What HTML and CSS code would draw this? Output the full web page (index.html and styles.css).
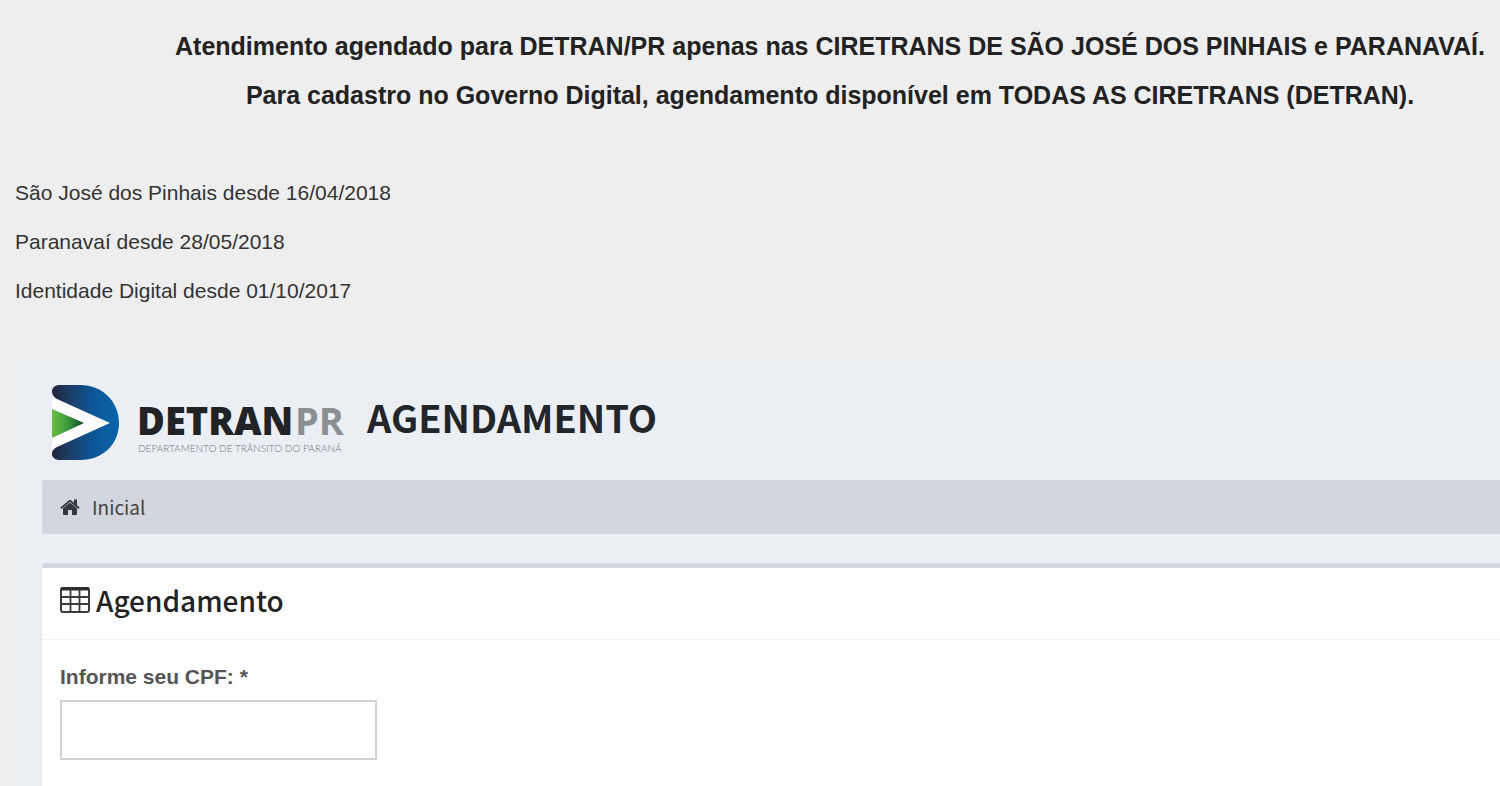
FILE: index.html
```
<!DOCTYPE html>
<html lang="pt-br">

<head>
    <meta charset="UTF-8">
    <meta name="viewport" content="width=device-width, initial-scale=1.0">
    <title>Agendamento</title>
    <link rel="stylesheet" href="styles.css">
</head>

<body>
    <div class="aviso">
        <p>Atendimento agendado para DETRAN/PR apenas nas CIRETRANS DE SÃO JOSÉ DOS PINHAIS e PARANAVAÍ.</p>
        <p>Para cadastro no Governo Digital, agendamento disponível em TODAS AS CIRETRANS (DETRAN).</p>
    </div>
    <div class="datas">
        <p>São José dos Pinhais desde 16/04/2018</p>
        <p>Paranavaí desde 28/05/2018</p>
        <p>Identidade Digital desde 01/10/2017</p>
    </div>
    <div class="painel">
        <!-- logo e titulo -->
        <div class="topo">
            <svg class="logo" width="310" height="84" viewBox="0 0 310 84">
                <defs>
                    <linearGradient id="azul" x1="0" y1="0" x2="1" y2="0">
                        <stop offset="0" stop-color="#20243c"></stop>
                        <stop offset="0.25" stop-color="#1d3c66"></stop>
                        <stop offset="0.6" stop-color="#0c5596"></stop>
                        <stop offset="1" stop-color="#0a64a8"></stop>
                    </linearGradient>
                    <linearGradient id="verde" x1="0" y1="0" x2="1" y2="0">
                        <stop offset="0" stop-color="#6cbb45"></stop>
                        <stop offset="0.45" stop-color="#3f9e3b"></stop>
                        <stop offset="1" stop-color="#0c4a25"></stop>
                    </linearGradient>
                </defs>
                <path fill="#ffffff" d="M10 16 L66 38 L66 46 L10 68 Z"></path>
                <path fill="url(#azul)" d="M18 4 H38 C61 4 77 21 77 42 C77 63 61 79 38 79 H18 C9 79 7 70 15 66 L68 42 L15 18 C7 13 9 4 18 4 Z"></path>
                <path fill="url(#verde)" d="M10 28 L42 42 L10 57 Z"></path>
                <text class="logo_detran" x="95" y="54">DETRAN</text>
                <text class="logo_pr" x="253" y="54">PR</text>
                <text class="logo_sub" x="96" y="71">DEPARTAMENTO DE TRÂNSITO DO PARANÁ</text>
            </svg>
            <h1>AGENDAMENTO</h1>
        </div>
        <!-- menu -->
        <nav class="menu">
            <a href="#">
                <svg width="20" height="18" viewBox="0 0 20 18">
                    <path fill="#333740" d="M10 4.500 L17 10.300 V16 Q17 17 16 17 H12 V12 H8 V17 H4 Q3 17 3 16 V10.300 Z"></path>
                    <path fill="#333740" d="M14 1.500 H17 V7.300 L19.600 9.500 L18.500 10.900 L10 3.800 L1.500 10.900 L0.400 9.500 L9 2.200 Q10 1.400 11 2.200 L14 4.700 Z"></path>
                </svg>
                <span>Inicial</span>
            </a>
        </nav>
        <!-- formulario -->
        <div class="caixa">
            <h2>
                <svg width="30" height="26" viewBox="0 0 30 26">
                    <rect x="1" y="1" width="28" height="24" rx="2" fill="none" stroke="#3b3b3b" stroke-width="2"></rect>
                    <path stroke="#2b2b2b" stroke-width="3" d="M1 2 H29"></path>
                    <path fill="none" stroke="#3b3b3b" stroke-width="1.800" d="M1 10 H29 M1 17 H29 M10.500 2 V25 M19.500 2 V25"></path>
                </svg>
                <span>Agendamento</span>
            </h2>
            <form action="#" method="POST">
                <label for="cpfId">Informe seu CPF: *</label>
                <input type="text" name="cpf" class="cpf" id="cpfId" value="">
            </form>
        </div>
    </div>
</body>

</html>
```
FILE: styles.css
```
body,p,h1,h2,form,input {
    margin: 0;
    padding: 0;
}
html {
    background-color: #eeeeee;
}
body {
    font: normal 21px/49px 'Liberation Sans', Arial, sans-serif;
    color: #333333;
    overflow: hidden;
}
a {
    text-decoration: none;
}
.aviso {
    padding: 22px 0 0 160px;
    font-size: 25px;
    font-weight: bold;
    color: #222222;
    text-align: center;
    white-space: nowrap;
}
.datas {
    padding: 48px 15px 43px;
}
.painel {
    margin-left: 15px;
    padding: 23px 0 0 27px;
    background-color: #ebeff4;
}
.topo {
    display: flex;
    height: 99px;
    align-items: flex-start;
    gap: 15px;
}
.logo {
    overflow: visible;
}
.logo_detran,.logo_pr {
    font: bold 38px 'Open Sans', sans-serif;
    fill: #222326;
}
.logo_detran {
    font-weight: 800;
}
.logo_pr {
    fill: #8b8f94;
}
.logo_sub {
    font: 300 10px Lato, sans-serif;
    fill: #6f7276;
}
h1 {
    font: bold 38px/72px 'Noto Sans CJK SC', sans-serif;
    color: #222529;
}
.menu {
    height: 54px;
    border-radius: 2px 0 0 2px;
    background-color: #d2d6df;
}
.menu a {
    display: inline-flex;
    height: 54px;
    padding-left: 18px;
    align-items: center;
    gap: 12px;
    font: normal 19px/54px 'Noto Sans CJK SC', sans-serif;
    color: #444444;
}
.caixa {
    margin-top: 29px;
    border-top: 5px solid #d2d6de;
    border-radius: 4px 0 0 0;
    background-color: #ffffff;
    box-shadow: 0 1px 2px rgba(0, 0, 0, 0.1);
}
.caixa h2 {
    display: flex;
    height: 71px;
    padding-left: 18px;
    border-bottom: 1px solid #f4f4f4;
    gap: 6px;
    font: 500 28px/64px 'Noto Sans CJK SC', sans-serif;
    color: #222222;
}
.caixa h2 svg {
    margin-top: 19px;
}
.caixa form {
    padding: 24px 18px 40px;
}
.caixa label {
    display: block;
    margin-bottom: 11px;
    font-weight: bold;
    line-height: 25px;
    color: #555555;
}
.cpf {
    display: block;
    box-sizing: border-box;
    width: 317px;
    height: 60px;
    padding: 0 16px;
    border: 2px solid #d2d2d2;
    outline: 0;
    background-color: #ffffff;
    font: normal 21px 'Liberation Sans', Arial, sans-serif;
}
```
